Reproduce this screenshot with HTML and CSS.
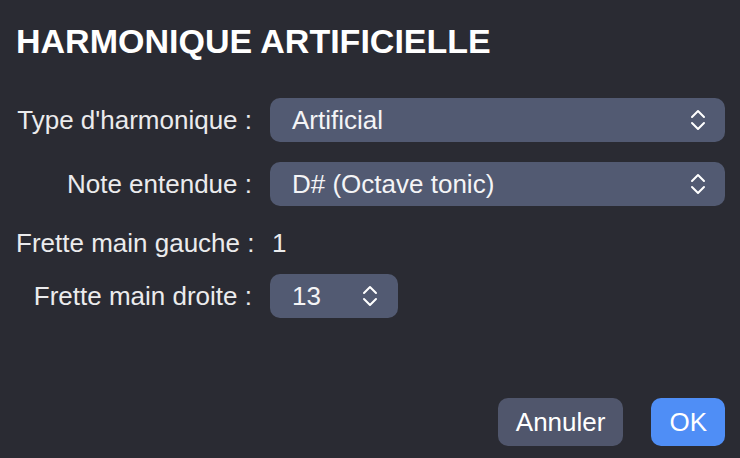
FILE: index.html
```html
<!DOCTYPE html>
<html lang="fr">
<head>
<meta charset="utf-8">
<title>Harmonique artificielle</title>
<link rel="stylesheet" href="styles.css">
</head>
<body>
<div class="dialog">
  <h1 class="title">HARMONIQUE ARTIFICIELLE</h1>
  <div class="form">
    <div class="row row-select">
      <span class="label">Type d'harmonique :</span>
      <div class="select wide">
        <span class="value">Artificial</span>
        <svg class="chev" width="16" height="24" viewBox="0 0 16 24"><path d="M2 9 L8 3 L14 9 M2 15 L8 21 L14 15" fill="none" stroke="#fff" stroke-width="2" stroke-linecap="round" stroke-linejoin="round"/></svg>
      </div>
    </div>
    <div class="row row-select gap">
      <span class="label">Note entendue :</span>
      <div class="select wide">
        <span class="value">D# (Octave tonic)</span>
        <svg class="chev" width="16" height="24" viewBox="0 0 16 24"><path d="M2 9 L8 3 L14 9 M2 15 L8 21 L14 15" fill="none" stroke="#fff" stroke-width="2" stroke-linecap="round" stroke-linejoin="round"/></svg>
      </div>
    </div>
    <div class="row row-text gap">
      <span class="label">Frette main gauche :</span>
      <span class="plain">1</span>
    </div>
    <div class="row row-select gap-small">
      <span class="label">Frette main droite :</span>
      <div class="select narrow">
        <span class="value">13</span>
        <svg class="chev" width="16" height="24" viewBox="0 0 16 24"><path d="M2 9 L8 3 L14 9 M2 15 L8 21 L14 15" fill="none" stroke="#fff" stroke-width="2" stroke-linecap="round" stroke-linejoin="round"/></svg>
      </div>
    </div>
  </div>
  <div class="buttons">
    <button class="btn btn-cancel">Annuler</button>
    <button class="btn btn-ok">OK</button>
  </div>
</div>
</body>
</html>
```
FILE: styles.css
```css
html, body {
  margin: 0;
  padding: 0;
  background: #2a2b33;
}
body {
  width: 740px;
  height: 458px;
  overflow: hidden;
  font-family: "Liberation Sans", Arial, sans-serif;
  color: #eeeef0;
}
.dialog {
  box-sizing: border-box;
  height: 458px;
  display: flex;
  flex-direction: column;
  padding: 21px 15px 12px 16px;
}
.title {
  margin: 0;
  font-size: 34px;
  line-height: 40px;
  font-weight: bold;
  color: #ffffff;
}
.form {
  display: flex;
  flex-direction: column;
  margin-top: 37px;
}
.row {
  display: flex;
  align-items: center;
  column-gap: 18px;
  font-size: 26px;
}
.row-select { height: 44px; }
.row-text { height: 35px; line-height: 35px; }
.gap { margin-top: 20px; }
.gap-small { margin-top: 13px; }
.label {
  width: 236px;
  text-align: right;
  white-space: nowrap;
  color: #ebebed;
}
.plain {
  padding-left: 2px;
  color: #ebebed;
}
.select {
  box-sizing: border-box;
  height: 44px;
  background: #525a72;
  border-radius: 10px;
  display: flex;
  align-items: center;
  justify-content: space-between;
  padding: 0 19px 0 22px;
  color: #f4f4f6;
}
.select.wide { flex: 1; }
.select.narrow { width: 128px; padding-right: 20px; }
.chev { display: block; }
.buttons {
  margin-top: auto;
  display: flex;
  justify-content: flex-end;
  column-gap: 28px;
}
.btn {
  font-family: "Liberation Sans", Arial, sans-serif;
  font-size: 26px;
  height: 48px;
  border: none;
  border-radius: 10px;
  padding: 0 18px;
  color: #ffffff;
}
.btn-cancel { background: #50566c; }
.btn-ok { background: #4f8ef6; }
```
